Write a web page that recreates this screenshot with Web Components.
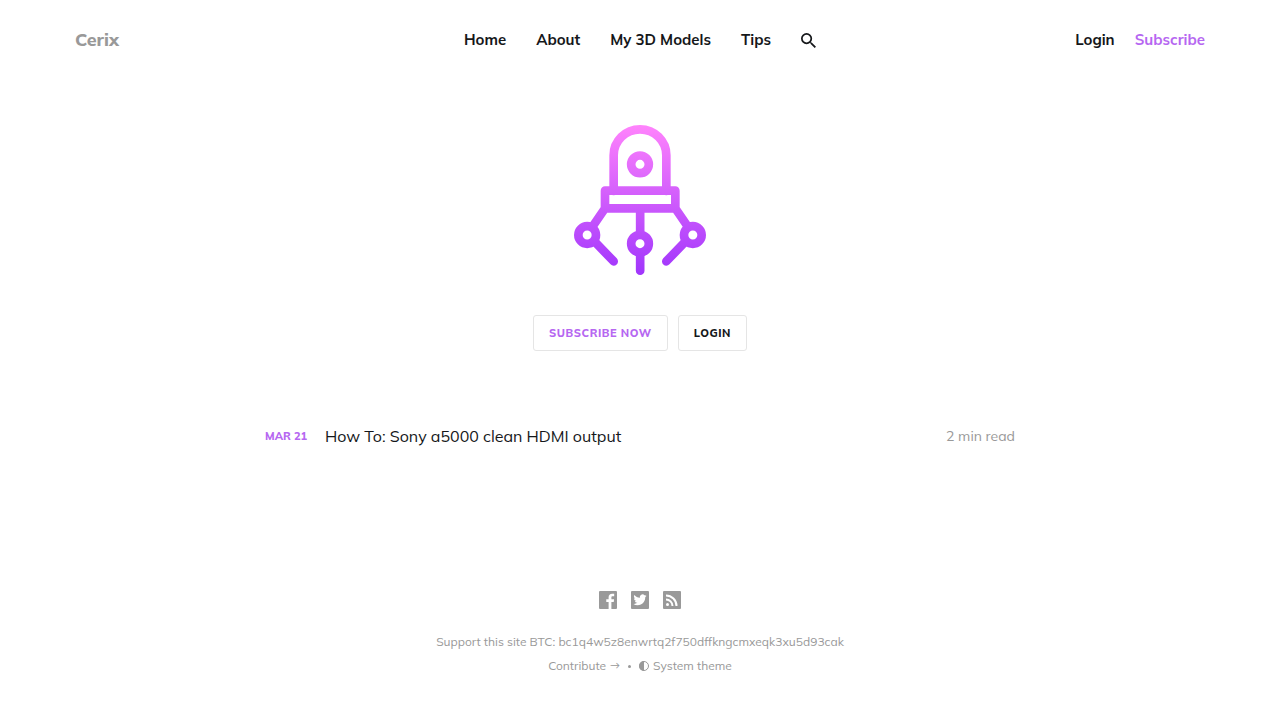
<!DOCTYPE html>
<html lang="en">
<head>
<meta charset="utf-8">
<meta name="viewport" content="width=device-width, initial-scale=1">
<title>Cerix</title>
<style>
body { margin: 0; background: #fff; color: #15171a; font: 16px/24px Mulish, Muli, Lato, "Open Sans", sans-serif; --accent: #b667f1; --muted: #999; --border: #e5e5e5; }
</style>
</head>
<body>
<cerix-page></cerix-page>
<script>
const define = (name, css, html) => customElements.define(name, class extends HTMLElement {
  constructor() {
    super();
    this.attachShadow({ mode: "open" }).innerHTML =
      `<style>*{box-sizing:border-box}a{color:inherit;text-decoration:none}svg{display:block}${css}</style>${html}`;
  }
});

define("site-header", `
  :host { display: grid; grid-template-columns: 1fr auto 1fr; align-items: center; height: 80px; padding: 0 75px; font-size: 15px; font-weight: 700; }
  .logo { color: var(--muted); font-size: 18px; font-weight: 800; }
  nav { display: flex; align-items: center; gap: 30px; }
  button { border: 0; padding: 0; background: none; color: inherit; cursor: pointer; }
  .account { display: flex; justify-content: flex-end; gap: 20px; }
  .accent { color: var(--accent); }`, `
  <a class="logo" href="#">Cerix</a>
  <nav><a href="#">Home</a><a href="#">About</a><a href="#">My 3D Models</a><a href="#">Tips</a>
    <button type="button" aria-label="Search"><svg width="15" height="15" viewBox="3 3 17.5 17.5" fill="currentColor"><path d="M15.5 14h-.79l-.28-.27A6.471 6.471 0 0 0 16 9.5 6.5 6.5 0 1 0 9.5 16c1.61 0 3.09-.59 4.23-1.57l.27.28v.79l5 4.99L20.49 19l-4.99-5zm-6 0C7.01 14 5 11.99 5 9.5S7.01 5 9.5 5 14 7.01 14 9.5 11.99 14 9.5 14z"/></svg></button>
  </nav>
  <div class="account"><a href="#">Login</a><a class="accent" href="#">Subscribe</a></div>`);

define("robot-claw", `:host { display: block; width: 132px; height: 150px; }`, `
  <svg width="132" height="150" viewBox="42 30 396 450" fill="none" stroke="url(#g)" stroke-width="26" stroke-linecap="round" stroke-linejoin="round" aria-hidden="true">
    <defs><linearGradient id="g" gradientUnits="userSpaceOnUse" x1="0" y1="30" x2="0" y2="480"><stop stop-color="#ff83fc"/><stop offset="1" stop-color="#a035fc"/></linearGradient></defs>
    <path d="M161 228V121a79 78 0 0 1 158 0v107M135 227h211v53H135zM135 280l-37 54M346 280l37 54M240.500 280v68M240.500 424v43M103 379l58 60M377 379l-58 60"/>
    <circle cx="240" cy="148" r="26.500"/><circle cx="240" cy="386" r="26.500"/><circle cx="81.500" cy="360" r="26.500"/><circle cx="398.500" cy="360" r="26.500"/>
  </svg>`);

define("outline-button", `
  :host { display: block; }
  button { height: 36px; padding: 0 15px; border: 1px solid var(--border); border-radius: 3px; background: #fff; color: inherit; font: inherit; font-size: 11px; font-weight: 800; letter-spacing: .05em; text-transform: uppercase; cursor: pointer; }`,
  `<button type="button"><slot></slot></button>`);

define("site-hero", `
  :host { display: flex; flex-direction: column; align-items: center; gap: 40px; padding: 45px 20px 0; }
  .actions { display: flex; gap: 10px; }
  .accent { color: var(--accent); }`, `
  <robot-claw></robot-claw>
  <div class="actions"><outline-button class="accent">Subscribe now</outline-button><outline-button>Login</outline-button></div>`);

define("post-row", `
  :host { display: block; }
  a { display: grid; grid-template-columns: 60px 1fr auto; align-items: center; }
  .date { color: var(--accent); font-size: 11px; font-weight: 800; text-transform: uppercase; }
  .title { font-size: 16px; }
  .time { color: var(--muted); font-size: 14px; }`, `
  <a href="#"><span class="date"><slot name="date"></slot></span><span class="title"><slot></slot></span><span class="time"><slot name="time"></slot></span></a>`);

define("site-footer", `
  :host { display: flex; flex-direction: column; align-items: center; color: var(--muted); font-size: 12px; }
  .social { display: flex; gap: 14px; margin-bottom: 21px; }
  .links { display: flex; align-items: center; gap: 8px; }
  .dot { width: 3px; height: 3px; border-radius: 50%; background: currentColor; }
  button { display: flex; align-items: center; gap: 4px; padding: 0; border: 0; background: none; color: inherit; font: inherit; cursor: pointer; }
  .contribute { display: flex; align-items: center; gap: 4px; }
  .arrow { font-size: 10px; }`, `
  <div class="social">
    <a href="#" aria-label="Facebook"><svg width="18" height="18" viewBox="3 3 18 18" fill="currentColor"><path d="M15.402 21v-6.966h2.333l.349-2.708h-2.682V9.598c0-.784.218-1.319 1.342-1.319h1.434V5.857a19.188 19.188 0 0 0-2.090-.107c-2.067 0-3.482 1.262-3.482 3.580v1.996h-2.338v2.708h2.338V21H4a1 1 0 0 1-1-1V4a1 1 0 0 1 1-1h16a1 1 0 0 1 1 1v16a1 1 0 0 1-1 1z"/></svg></a>
    <a href="#" aria-label="Twitter"><svg width="18" height="18" viewBox="0 0 18 18"><rect width="18" height="18" rx="1" fill="currentColor"/><path fill="#fff" transform="translate(2.400 2.200) scale(.55)" d="M23.953 4.570a10 10 0 01-2.825.775 4.958 4.958 0 002.163-2.723c-.951.555-2.005.959-3.127 1.184a4.920 4.920 0 00-8.384 4.482C7.690 8.095 4.067 6.130 1.640 3.162a4.822 4.822 0 00-.666 2.475c0 1.710.870 3.213 2.188 4.096a4.904 4.904 0 01-2.228-.616v.060a4.923 4.923 0 003.946 4.827 4.996 4.996 0 01-2.212.085 4.936 4.936 0 004.604 3.417 9.867 9.867 0 01-6.102 2.105c-.390 0-.779-.023-1.170-.067a13.995 13.995 0 007.557 2.209c9.053 0 13.998-7.496 13.998-13.985 0-.210 0-.420-.015-.630A9.935 9.935 0 0024 4.590z"/></svg></a>
    <a href="#" aria-label="RSS"><svg width="18" height="18" viewBox="0 0 18 18" fill="none" stroke="#fff" stroke-width="2"><rect width="18" height="18" rx="1" fill="#999" stroke="none"/><path d="M3 4.500A10.500 10.500 0 0 1 13.500 15M3 8.500A6.500 6.500 0 0 1 9.500 15"/><circle cx="4.500" cy="13.500" r="1.500" fill="#fff" stroke="none"/></svg></a>
  </div>
  <div>Support this site BTC: bc1q4w5z8enwrtq2f750dffkngcmxeqk3xu5d93cak</div>
  <div class="links">
    <a class="contribute" href="#">Contribute <span class="arrow">→</span></a><span class="dot"></span>
    <button type="button"><svg width="10" height="10" viewBox="0 0 10 10" aria-hidden="true"><circle cx="5" cy="5" r="4.500" fill="none" stroke="currentColor"/><path d="M5 0a5 5 0 0 0 0 10z" fill="currentColor"/></svg>System theme</button>
  </div>`);

define("cerix-page", `
  :host { display: block; }
  .posts { max-width: 790px; margin: 0 auto; padding: 73px 20px 143px; }
  site-footer { padding: 0 20px 42px; }`, `
  <site-header></site-header>
  <main><site-hero></site-hero>
    <section class="posts"><post-row><span slot="date">Mar 21</span>How To: Sony a5000 clean HDMI output<span slot="time">2 min read</span></post-row></section>
  </main>
  <site-footer></site-footer>`);
</script>
</body>
</html>
